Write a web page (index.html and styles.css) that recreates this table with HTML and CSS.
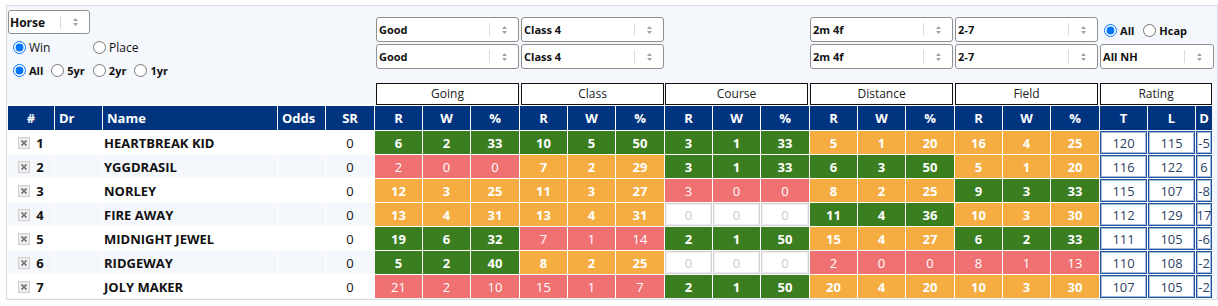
FILE: index.html
```html
<!DOCTYPE html>
<html>
<head>
<meta charset="utf-8">
<title>Form Stats</title>
<link rel="stylesheet" href="styles.css">
</head>
<body>
<div class="wrap">
<table class="grid">
<colgroup>
<col class="c-num"><col class="c-dr"><col class="c-name"><col class="c-odds"><col class="c-sr">
<col class="c-a"><col class="c-a"><col class="c-b">
<col class="c-a"><col class="c-a"><col class="c-b">
<col class="c-a"><col class="c-a"><col class="c-b">
<col class="c-a"><col class="c-a"><col class="c-b">
<col class="c-a"><col class="c-a"><col class="c-b">
<col class="c-t"><col class="c-t"><col class="c-d">
</colgroup>
<thead>
<tr class="ctl">
<td colspan="5" rowspan="2" class="left">
  <div class="sel horse"><span class="txt">Horse</span><span class="sep"></span><span class="arr"><svg width="7" height="10" viewBox="0 0 7 10"><path d="M1 4 L3.5 1 L6 4 Z M1 6 L3.5 9 L6 6 Z" fill="#a3a3a3"/></svg></span></div>
  <div class="rrow one">
    <label class="rl win"><input type="radio" name="wp" checked>Win</label>
    <label class="rl"><input type="radio" name="wp">Place</label>
  </div>
  <div class="rrow two">
    <label class="rl"><input type="radio" name="yr" checked>All</label>
    <label class="rl"><input type="radio" name="yr">5yr</label>
    <label class="rl"><input type="radio" name="yr">2yr</label>
    <label class="rl"><input type="radio" name="yr">1yr</label>
  </div>
</td>
<td colspan="3" class="sc">
  <div class="sel mid m2"><span class="txt">Good</span><span class="sep"></span><span class="arr"><svg width="7" height="10" viewBox="0 0 7 10"><path d="M1 4 L3.5 1 L6 4 Z M1 6 L3.5 9 L6 6 Z" fill="#a3a3a3"/></svg></span></div>
  <div class="sel mid m2"><span class="txt">Good</span><span class="sep"></span><span class="arr"><svg width="7" height="10" viewBox="0 0 7 10"><path d="M1 4 L3.5 1 L6 4 Z M1 6 L3.5 9 L6 6 Z" fill="#a3a3a3"/></svg></span></div>
</td>
<td colspan="3" class="sc">
  <div class="sel mid m2"><span class="txt">Class 4</span><span class="sep"></span><span class="arr"><svg width="7" height="10" viewBox="0 0 7 10"><path d="M1 4 L3.5 1 L6 4 Z M1 6 L3.5 9 L6 6 Z" fill="#a3a3a3"/></svg></span></div>
  <div class="sel mid m2"><span class="txt">Class 4</span><span class="sep"></span><span class="arr"><svg width="7" height="10" viewBox="0 0 7 10"><path d="M1 4 L3.5 1 L6 4 Z M1 6 L3.5 9 L6 6 Z" fill="#a3a3a3"/></svg></span></div>
</td>
<td colspan="3" class="sc"></td>
<td colspan="3" class="sc">
  <div class="sel mid"><span class="txt">2m 4f</span><span class="sep"></span><span class="arr"><svg width="7" height="10" viewBox="0 0 7 10"><path d="M1 4 L3.5 1 L6 4 Z M1 6 L3.5 9 L6 6 Z" fill="#a3a3a3"/></svg></span></div>
  <div class="sel mid"><span class="txt">2m 4f</span><span class="sep"></span><span class="arr"><svg width="7" height="10" viewBox="0 0 7 10"><path d="M1 4 L3.5 1 L6 4 Z M1 6 L3.5 9 L6 6 Z" fill="#a3a3a3"/></svg></span></div>
</td>
<td colspan="3" class="sc">
  <div class="sel mid"><span class="txt">2-7</span><span class="sep"></span><span class="arr"><svg width="7" height="10" viewBox="0 0 7 10"><path d="M1 4 L3.5 1 L6 4 Z M1 6 L3.5 9 L6 6 Z" fill="#a3a3a3"/></svg></span></div>
  <div class="sel mid"><span class="txt">2-7</span><span class="sep"></span><span class="arr"><svg width="7" height="10" viewBox="0 0 7 10"><path d="M1 4 L3.5 1 L6 4 Z M1 6 L3.5 9 L6 6 Z" fill="#a3a3a3"/></svg></span></div>
</td>
<td colspan="3" class="sc">
  <div class="rrow hc">
    <label class="rl"><input type="radio" name="hc" checked>All</label>
    <label class="rl"><input type="radio" name="hc">Hcap</label>
  </div>
  <div class="sel nh"><span class="txt">All NH</span><span class="sep"></span><span class="arr"><svg width="7" height="10" viewBox="0 0 7 10"><path d="M1 4 L3.5 1 L6 4 Z M1 6 L3.5 9 L6 6 Z" fill="#a3a3a3"/></svg></span></div>
</td>
</tr>
<tr class="grp">
<td colspan="3"><div class="gb m2">Going</div></td>
<td colspan="3"><div class="gb m2">Class</div></td>
<td colspan="3"><div class="gb">Course</div></td>
<td colspan="3"><div class="gb">Distance</div></td>
<td colspan="3"><div class="gb">Field</div></td>
<td colspan="3"><div class="gb rat">Rating</div></td>
</tr>
<tr class="hdr">
<th>#</th><th class="lft">Dr</th><th class="lft">Name</th><th class="lft">Odds</th><th>SR</th>
<th>R</th><th>W</th><th>%</th>
<th>R</th><th>W</th><th>%</th>
<th>R</th><th>W</th><th>%</th>
<th>R</th><th>W</th><th>%</th>
<th>R</th><th>W</th><th>%</th>
<th>T</th><th>L</th><th>D</th>
</tr>
</thead>
<tbody>
<tr>
<td class="l num"><svg class="x" width="12" height="12" viewBox="0 0 12 12"><rect x="0.5" y="0.5" width="11" height="11" fill="#ececec" stroke="#cfcfcf"/><path d="M3.5 3.5 L8.5 8.5 M8.5 3.5 L3.5 8.5" stroke="#6e6e6e" stroke-width="1.6"/></svg>1</td>
<td class="l"></td><td class="l nm">HEARTBREAK KID</td><td class="l"></td><td class="l sr">0</td>
<td class="g">6</td><td class="g">2</td><td class="g">33</td>
<td class="g">10</td><td class="g">5</td><td class="g">50</td>
<td class="g">3</td><td class="g">1</td><td class="g">33</td>
<td class="o">5</td><td class="o">1</td><td class="o">20</td>
<td class="o">16</td><td class="o">4</td><td class="o">25</td>
<td class="rt">120</td><td class="rt">115</td><td class="rt">-5</td>
</tr>
<tr class="alt">
<td class="l num"><svg class="x" width="12" height="12" viewBox="0 0 12 12"><rect x="0.5" y="0.5" width="11" height="11" fill="#ececec" stroke="#cfcfcf"/><path d="M3.5 3.5 L8.5 8.5 M8.5 3.5 L3.5 8.5" stroke="#6e6e6e" stroke-width="1.6"/></svg>2</td>
<td class="l"></td><td class="l nm">YGGDRASIL</td><td class="l"></td><td class="l sr">0</td>
<td class="r">2</td><td class="r">0</td><td class="r">0</td>
<td class="o">7</td><td class="o">2</td><td class="o">29</td>
<td class="g">3</td><td class="g">1</td><td class="g">33</td>
<td class="g">6</td><td class="g">3</td><td class="g">50</td>
<td class="o">5</td><td class="o">1</td><td class="o">20</td>
<td class="rt">116</td><td class="rt">122</td><td class="rt">6</td>
</tr>
<tr>
<td class="l num"><svg class="x" width="12" height="12" viewBox="0 0 12 12"><rect x="0.5" y="0.5" width="11" height="11" fill="#ececec" stroke="#cfcfcf"/><path d="M3.5 3.5 L8.5 8.5 M8.5 3.5 L3.5 8.5" stroke="#6e6e6e" stroke-width="1.6"/></svg>3</td>
<td class="l"></td><td class="l nm">NORLEY</td><td class="l"></td><td class="l sr">0</td>
<td class="o">12</td><td class="o">3</td><td class="o">25</td>
<td class="o">11</td><td class="o">3</td><td class="o">27</td>
<td class="r">3</td><td class="r">0</td><td class="r">0</td>
<td class="o">8</td><td class="o">2</td><td class="o">25</td>
<td class="g">9</td><td class="g">3</td><td class="g">33</td>
<td class="rt">115</td><td class="rt">107</td><td class="rt">-8</td>
</tr>
<tr class="alt">
<td class="l num"><svg class="x" width="12" height="12" viewBox="0 0 12 12"><rect x="0.5" y="0.5" width="11" height="11" fill="#ececec" stroke="#cfcfcf"/><path d="M3.5 3.5 L8.5 8.5 M8.5 3.5 L3.5 8.5" stroke="#6e6e6e" stroke-width="1.6"/></svg>4</td>
<td class="l"></td><td class="l nm">FIRE AWAY</td><td class="l"></td><td class="l sr">0</td>
<td class="o">13</td><td class="o">4</td><td class="o">31</td>
<td class="o">13</td><td class="o">4</td><td class="o">31</td>
<td class="z">0</td><td class="z">0</td><td class="z">0</td>
<td class="g">11</td><td class="g">4</td><td class="g">36</td>
<td class="o">10</td><td class="o">3</td><td class="o">30</td>
<td class="rt">112</td><td class="rt">129</td><td class="rt">17</td>
</tr>
<tr>
<td class="l num"><svg class="x" width="12" height="12" viewBox="0 0 12 12"><rect x="0.5" y="0.5" width="11" height="11" fill="#ececec" stroke="#cfcfcf"/><path d="M3.5 3.5 L8.5 8.5 M8.5 3.5 L3.5 8.5" stroke="#6e6e6e" stroke-width="1.6"/></svg>5</td>
<td class="l"></td><td class="l nm">MIDNIGHT JEWEL</td><td class="l"></td><td class="l sr">0</td>
<td class="g">19</td><td class="g">6</td><td class="g">32</td>
<td class="r">7</td><td class="r">1</td><td class="r">14</td>
<td class="g">2</td><td class="g">1</td><td class="g">50</td>
<td class="o">15</td><td class="o">4</td><td class="o">27</td>
<td class="g">6</td><td class="g">2</td><td class="g">33</td>
<td class="rt">111</td><td class="rt">105</td><td class="rt">-6</td>
</tr>
<tr class="alt">
<td class="l num"><svg class="x" width="12" height="12" viewBox="0 0 12 12"><rect x="0.5" y="0.5" width="11" height="11" fill="#ececec" stroke="#cfcfcf"/><path d="M3.5 3.5 L8.5 8.5 M8.5 3.5 L3.5 8.5" stroke="#6e6e6e" stroke-width="1.6"/></svg>6</td>
<td class="l"></td><td class="l nm">RIDGEWAY</td><td class="l"></td><td class="l sr">0</td>
<td class="g">5</td><td class="g">2</td><td class="g">40</td>
<td class="o">8</td><td class="o">2</td><td class="o">25</td>
<td class="z">0</td><td class="z">0</td><td class="z">0</td>
<td class="r">2</td><td class="r">0</td><td class="r">0</td>
<td class="r">8</td><td class="r">1</td><td class="r">13</td>
<td class="rt">110</td><td class="rt">108</td><td class="rt">-2</td>
</tr>
<tr>
<td class="l num"><svg class="x" width="12" height="12" viewBox="0 0 12 12"><rect x="0.5" y="0.5" width="11" height="11" fill="#ececec" stroke="#cfcfcf"/><path d="M3.5 3.5 L8.5 8.5 M8.5 3.5 L3.5 8.5" stroke="#6e6e6e" stroke-width="1.6"/></svg>7</td>
<td class="l"></td><td class="l nm">JOLY MAKER</td><td class="l"></td><td class="l sr">0</td>
<td class="r">21</td><td class="r">2</td><td class="r">10</td>
<td class="r">15</td><td class="r">1</td><td class="r">7</td>
<td class="g">2</td><td class="g">1</td><td class="g">50</td>
<td class="o">20</td><td class="o">4</td><td class="o">20</td>
<td class="o">10</td><td class="o">3</td><td class="o">30</td>
<td class="rt">107</td><td class="rt">105</td><td class="rt">-2</td>
</tr>
</tbody>
</table>
</div>
</body>
</html>
```

FILE: styles.css
```css
* { box-sizing: border-box; }
html, body { margin: 0; padding: 0; background: #fff; }
body { font-family: "Open Sans", "Noto Sans", sans-serif; color: #111; }

.wrap {
  margin: 5px 0 0 6px;
  width: 1212px;
  border: 1px solid #d6dae1;
  background: #f4f7fc;
  padding: 0 0 1px 0;
}

.grid {
  border-collapse: separate;
  border-spacing: 0;
  table-layout: fixed;
  width: 1205px;
}
.c-num { width: 47px; }
.c-dr { width: 48px; }
.c-name { width: 175px; }
.c-odds { width: 48px; }
.c-sr { width: 49px; }
.c-a { width: 48px; }
.c-b { width: 49px; }
.c-t { width: 48px; }
.c-d { width: 17px; }

.grid td, .grid th { padding: 0; }

/* control row */
.ctl td { height: 75px; vertical-align: top; }
.ctl td.sc { padding-top: 11px; }
.ctl td.left { padding: 4px 0 0 1px; }

.sel {
  display: flex;
  align-items: center;
  height: 25px;
  border: 1px solid #8f8f8f;
  border-radius: 3px;
  background: #fff;
  font-size: 11px;
  font-weight: 700;
  color: #111;
  padding-left: 2px;
}
.sel .txt { flex: 1; white-space: nowrap; }
.sel .sep { width: 1px; height: 13px; background: #dcdcdc; }
.sel .arr { width: 28px; display: flex; justify-content: center; align-items: center; }
.sel.mid { width: 143px; margin-left: 1px; }
.sel.mid + .sel.mid { margin-top: 2px; }
.sel.m2 { margin-left: 2px; }
.sel.horse { width: 82px; height: 24px; font-size: 12px; padding-left: 1px; }
.sel.nh { width: 114px; margin-left: 1px; margin-top: 1px; }

.rrow { display: flex; align-items: center; height: 20px; }
.rrow.one { margin-top: 3px; font-size: 12px; }
.rrow.two { margin-top: 3px; font-size: 11px; font-weight: 700; gap: 3px; }
.rrow.hc { height: 26px; font-size: 11px; font-weight: 700; gap: 4px; }
.rl { display: flex; align-items: center; white-space: nowrap; }
.rl input { margin: 0 3px 0 5px; width: 13px; height: 13px; }
.rl.win { width: 80px; }

/* group row */
.grp td { height: 24px; vertical-align: top; }
.gb {
  margin: 2px 0 0 1px;
  width: 143px;
  height: 22px;
  border: 1px solid #111;
  background: #fff;
  font-size: 12px;
  line-height: 20px;
  text-align: center;
  color: #222;
}
.gb.m2 { margin-left: 2px; }
.gb.rat { width: 112px; }

/* header row */
.hdr th {
  height: 25px;
  background: #00347f;
  color: #fff;
  font-size: 13px;
  font-weight: 700;
  text-align: center;
  border-left: 1px solid #fff;
  border-top: 1px solid #fff;
  white-space: nowrap;
}
.hdr th.lft { text-align: left; padding-left: 4px; }

/* data rows */
tbody td {
  height: 24px;
  border-left: 1px solid #fff;
  border-top: 1px solid #fff;
  text-align: center;
  font-size: 13px;
  font-weight: 700;
  color: #fff;
  white-space: nowrap;
  overflow: hidden;
}
tbody td.l { background: #fff; color: #111; }
tbody tr.alt td.l { background: #f4f7fc; }
tbody td.nm { text-align: left; padding-left: 1px; }
tbody td.sr { font-weight: 400; }
tbody td.num .x { vertical-align: -1px; margin-right: 6px; }

td.g { background: #3a7e1f; }
td.o { background: #f5ac40; }
td.r { background: #ef7171; font-weight: 400; }
td.z { background: #fff; color: #c9c9c9; font-weight: 400; box-shadow: inset 0 0 0 1px #d2d2d2, inset 0 0 0 2px rgba(210, 210, 210, 0.35); }
td.rt { background: #fff; color: #2a3f66; font-weight: 400; box-shadow: inset 0 0 0 1px #1f539f, inset 0 0 0 2px rgba(31, 83, 159, 0.4); }
```
